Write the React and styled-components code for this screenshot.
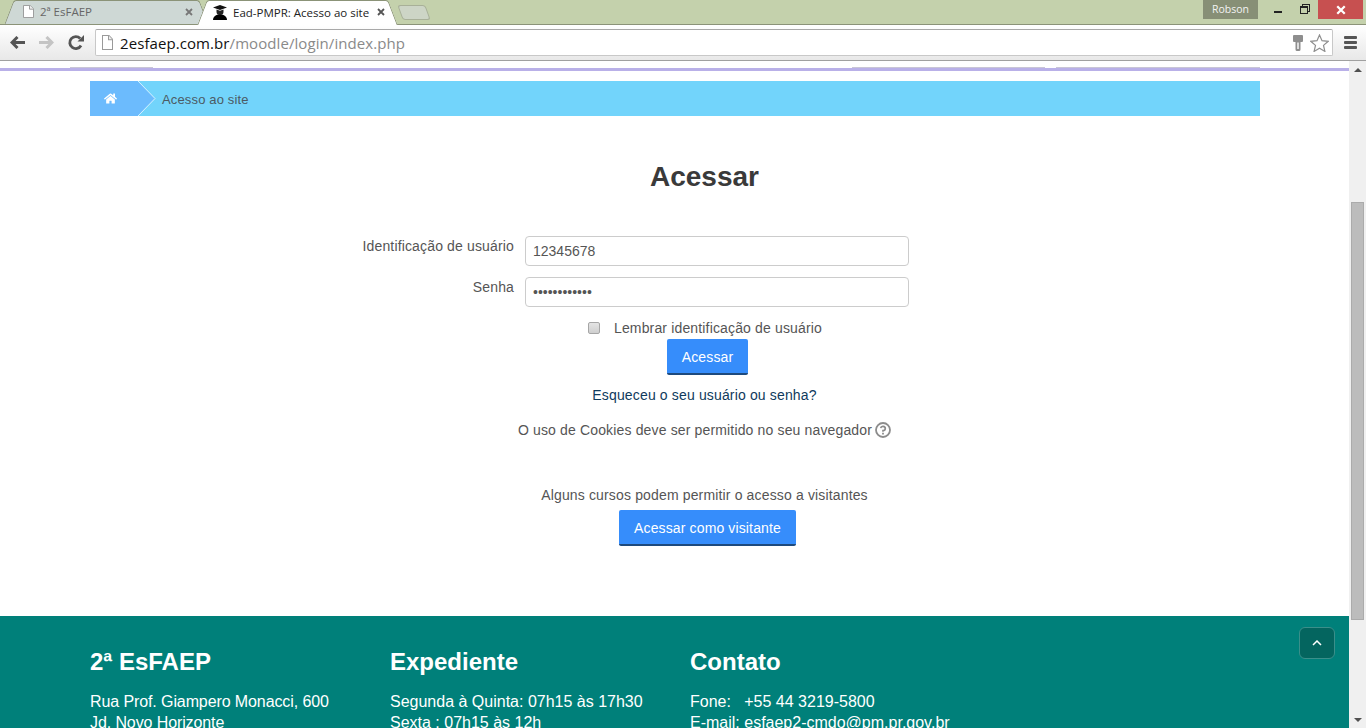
import styled, { createGlobalStyle } from "styled-components";
import { FaHome } from "react-icons/fa";

const GlobalStyle = createGlobalStyle`
  html, body {
    margin: 0;
    height: 100%;
    overflow: hidden;
    background: #ffffff;
  }
  * {
    box-sizing: border-box;
  }
`;

function PageIcon({ height }) {
  return (
    <svg width="11" height={height} viewBox="0 0 11 14" preserveAspectRatio="none">
      <path d="M.5 .5h6.500l3.500 3.500v9.500h-10z" fill="#fff" stroke="#9a9a9a" />
      <path d="M6.500 .5v4h4" fill="#eee" stroke="#9a9a9a" />
    </svg>
  );
}

function CapIcon() {
  return (
    <svg width="14" height="15" viewBox="0 0 14 15">
      <path d="M0 2.500L7 0l7 2.500L7 5z" fill="#111" />
      <path d="M3.500 4.500L7 5.700l3.500-1.200v2.500a3.500 3 0 0 1-7 0z" fill="#222" />
      <path d="M0 15c0-3.500 3-5.500 7-5.500s7 2 7 5.500z" fill="#000" />
    </svg>
  );
}

function ArrowLeft({ color }) {
  return (
    <svg width="15" height="13" viewBox="0 0 15 13">
      <path d="M7.500 1L2 6.500l5.500 5.500M2.500 6.500H15" fill="none" stroke={color} strokeWidth="3" />
    </svg>
  );
}

function ReloadIcon() {
  return (
    <svg width="16" height="16" viewBox="0 0 16 16">
      <path d="M13 10.500A6 6 0 1 1 12.200 3.500" fill="none" stroke="#555" strokeWidth="2.800" />
      <path d="M9.500 6.500H16V0z" fill="#555" />
    </svg>
  );
}

function KeyIcon() {
  return (
    <svg width="10" height="16" viewBox="0 0 10 16">
      <path
        d="M0 1a1 1 0 0 1 1-1h8a1 1 0 0 1 1 1v5a1 1 0 0 1-1 1H7.500v7.500a1.500 1.500 0 0 1-1.500 1.500H4a1.500 1.500 0 0 1-1.500-1.500V7H1a1 1 0 0 1-1-1z"
        fill="#8e8e8e"
      />
      <path d="M4.300 7.500h1.400v6.500H4.300z" fill="#fff" />
    </svg>
  );
}

function StarIcon() {
  return (
    <svg width="19" height="18" viewBox="0 0 19 18">
      <path
        d="M9.500 1l2.500 5.700 6.200.6-4.700 4.100 1.400 6-5.400-3.200-5.400 3.200 1.400-6L.8 7.300 7 6.700z"
        fill="#fff"
        stroke="#8e8e8e"
        strokeWidth="1.200"
      />
    </svg>
  );
}

function CloseGlyph({ color, size }) {
  return (
    <svg width={size} height={size} viewBox="0 0 8 8">
      <path d="M1 1l6 6M7 1L1 7" stroke={color} strokeWidth="1.800" />
    </svg>
  );
}

function HelpIcon() {
  return (
    <svg width="16" height="16" viewBox="0 0 16 16">
      <circle cx="8" cy="8" r="7" fill="none" stroke="#8c8c8c" strokeWidth="1.800" />
      <path d="M5.700 6.200A2.300 2.200 0 1 1 8 8.700v1" fill="none" stroke="#8c8c8c" strokeWidth="1.700" />
      <path d="M7.100 10.800h1.800v1.800H7.100z" fill="#8c8c8c" />
    </svg>
  );
}

export default function App() {
  return (
    <Screen>
      <GlobalStyle />
      <TabStrip>
        <Tab>
          <TabInner>
            <PageIcon height={13} />
            <TabTitle>2ª EsFAEP</TabTitle>
            <CloseGlyph color="#777" size={8} />
          </TabInner>
        </Tab>
        <Tab $active>
          <TabInner $active>
            <CapIcon />
            <TabTitle $active>Ead-PMPR: Acesso ao site</TabTitle>
            <CloseGlyph color="#555" size={8} />
          </TabInner>
        </Tab>
        <NewTab />
        <WindowArea>
          <UserBadge>Robson</UserBadge>
          <WinButton>
            <MinimizeBar />
          </WinButton>
          <WinButton>
            <RestoreBox />
          </WinButton>
          <CloseButton>
            <CloseGlyph color="#fff" size={10} />
          </CloseButton>
        </WindowArea>
      </TabStrip>

      <Toolbar>
        <NavButton>
          <ArrowLeft color="#555" />
        </NavButton>
        <NavButton $flip>
          <ArrowLeft color="#c4c4c4" />
        </NavButton>
        <NavButton>
          <ReloadIcon />
        </NavButton>
        <Omnibox>
          <PageIcon height={15} />
          <Url>
            2esfaep.com.br<UrlPath>/moodle/login/index.php</UrlPath>
          </Url>
          <KeyIcon />
          <StarIcon />
        </Omnibox>
        <MenuBars>
          <i />
          <i />
          <i />
        </MenuBars>
      </Toolbar>

      <Body>
        <Viewport>
          <TopNav>
            <NavLine $width="83px" $left="70px" />
            <NavLine $width="193px" $left="699px" />
            <NavLine $width="204px" $left="11px" />
          </TopNav>
          <Wrapper>
            <Breadcrumb>
              <HomeCrumb>
                <FaHome size={13} color="#ffffff" />
              </HomeCrumb>
              <CrumbArrow width="18" height="35" viewBox="0 0 18 35">
                <path d="M0 0l17 17.500L0 35z" fill="#6cbbfd" />
                <path d="M0 0l17 17.500L0 35" fill="none" stroke="#d8f3ff" />
              </CrumbArrow>
              <CrumbText>Acesso ao site</CrumbText>
            </Breadcrumb>
            <LoginBox>
              <Title>Acessar</Title>
              <FormRow>
                <FieldLabel>Identificação de usuário</FieldLabel>
                <TextInput readOnly value="12345678" />
              </FormRow>
              <FormRow>
                <FieldLabel>Senha</FieldLabel>
                <TextInput readOnly type="password" value="123456789012" />
              </FormRow>
              <RememberRow>
                <Check />
                Lembrar identificação de usuário
              </RememberRow>
              <PrimaryButton $top="1px">Acessar</PrimaryButton>
              <ForgotLink>Esqueceu o seu usuário ou senha?</ForgotLink>
              <Note $top="15px">
                O uso de Cookies deve ser permitido no seu navegador
                <HelpIcon />
              </Note>
              <Note $top="45px">Alguns cursos podem permitir o acesso a visitantes</Note>
              <PrimaryButton $top="5px">Acessar como visitante</PrimaryButton>
            </LoginBox>
          </Wrapper>
          <Footer>
            <FooterColumns>
              <FooterColumn>
                <FooterTitle>2ª EsFAEP</FooterTitle>
                <FooterText $tight>Rua Prof. Giampero Monacci, 600</FooterText>
                <FooterText $tight>Jd. Novo Horizonte</FooterText>
              </FooterColumn>
              <FooterColumn>
                <FooterTitle>Expediente</FooterTitle>
                <FooterText>Segunda à Quinta: 07h15 às 17h30</FooterText>
                <FooterText>Sexta : 07h15 às 12h</FooterText>
              </FooterColumn>
              <FooterColumn>
                <FooterTitle>Contato</FooterTitle>
                <FooterText>Fone:&nbsp;&nbsp; +55 44 3219-5800</FooterText>
                <FooterText>E-mail: esfaep2-cmdo@pm.pr.gov.br</FooterText>
              </FooterColumn>
            </FooterColumns>
            <BackToTop>
              <svg width="10" height="6" viewBox="0 0 10 6">
                <path d="M1 5l4-4 4 4" fill="none" stroke="#fff" strokeWidth="1.500" />
              </svg>
            </BackToTop>
          </Footer>
        </Viewport>
        <Scrollbar>
          <ScrollArrow $up />
          <ScrollTrack>
            <ScrollThumb />
          </ScrollTrack>
          <ScrollArrow />
        </Scrollbar>
      </Body>
    </Screen>
  );
}

const Screen = styled.div`
  width: 1366px;
  height: 728px;
  display: flex;
  flex-direction: column;
  overflow: hidden;
  font-family: "Liberation Sans", Arial, sans-serif;
`;

const TabStrip = styled.div`
  height: 25px;
  flex: none;
  display: flex;
  align-items: flex-end;
  padding-left: 13px;
  background: #c4d1ac;
  border-bottom: 1px solid #8b9378;
`;

const Tab = styled.div`
  position: relative;
  width: ${(p) => (p.$active ? "183px" : "187px")};
  margin-left: ${(p) => (p.$active ? "6px" : "0")};
  height: ${(p) => (p.$active ? "25px" : "24px")};
  margin-bottom: ${(p) => (p.$active ? "-1px" : "0")};
  z-index: ${(p) => (p.$active ? 2 : 1)};

  &::before,
  &::after {
    content: "";
    position: absolute;
    top: 0;
    bottom: 0;
    width: 60%;
    background: ${(p) => (p.$active ? "#ffffff" : "#ced8d5")};
    border-top: 1px solid #8b9378;
  }
  &::before {
    left: -4px;
    transform: skewX(-21deg);
    border-left: 1px solid #8b9378;
    border-radius: 3px 0 0 0;
  }
  &::after {
    right: -4px;
    transform: skewX(21deg);
    border-right: 1px solid #8b9378;
    border-radius: 0 3px 0 0;
  }
`;

const TabInner = styled.div`
  position: relative;
  z-index: 1;
  height: 100%;
  display: flex;
  align-items: center;
  gap: 6px;
  padding: 0 ${(p) => (p.$active ? "4px" : "7px")} 1px ${(p) => (p.$active ? "7px" : "10px")};
`;

const TabTitle = styled.span`
  flex: 1;
  font-family: "Open Sans", "Noto Sans", sans-serif;
  font-size: 11.5px;
  white-space: nowrap;
  color: ${(p) => (p.$active ? "#222222" : "#666666")};
`;

const NewTab = styled.div`
  width: 28px;
  height: 15px;
  margin: 0 0 4px 11px;
  background: #cdd5c6;
  border: 1px solid #a8b098;
  border-radius: 3px;
  transform: skewX(20deg);
`;

const WindowArea = styled.div`
  align-self: flex-start;
  margin-left: auto;
  height: 19px;
  display: flex;
  padding-right: 3px;
`;

const UserBadge = styled.div`
  width: 55px;
  margin-right: 7px;
  background: #878f76;
  color: #f2f2f2;
  font-family: "Open Sans", sans-serif;
  font-size: 10.5px;
  line-height: 18px;
  text-align: center;
`;

const WinButton = styled.div`
  width: 26px;
  display: flex;
  align-items: center;
  justify-content: center;
`;

const MinimizeBar = styled.div`
  width: 8px;
  height: 2px;
  margin-top: 5px;
  background: #222;
`;

const RestoreBox = styled.div`
  width: 8px;
  height: 8px;
  border: 1px solid #222;
  border-top-width: 2px;
  box-shadow: 2px -2px 0 -1px #c4d1ac, 2px -2px 0 0 #222;
`;

const CloseButton = styled.div`
  width: 45px;
  margin-left: 1px;
  background: #c75050;
  display: flex;
  align-items: center;
  justify-content: center;
`;

const Toolbar = styled.div`
  height: 36px;
  flex: none;
  display: flex;
  align-items: center;
  padding: 0 0 0 3px;
  background: linear-gradient(#ffffff, #f1f1f1 60%, #e8e8e8);
  border-bottom: 1px solid #a0a0a0;
`;

const NavButton = styled.div`
  width: 29px;
  height: 26px;
  display: flex;
  align-items: center;
  justify-content: center;
  transform: ${(p) => (p.$flip ? "scaleX(-1)" : "none")};
`;

const Omnibox = styled.div`
  width: 1238px;
  height: 27px;
  margin: 0 11px 0 5px;
  display: flex;
  align-items: center;
  gap: 7px;
  padding: 0 3px 0 6px;
  background: #ffffff;
  border: 1px solid #c8c8c8;
  border-top-color: #a8a8a8;
  border-radius: 2px;
`;

const Url = styled.div`
  flex: 1;
  font-family: "Open Sans", "Noto Sans", sans-serif;
  font-size: 15px;
  letter-spacing: 0.08px;
  color: #111111;
  white-space: nowrap;
`;

const UrlPath = styled.span`
  color: #8a8a8a;
`;

const MenuBars = styled.div`
  width: 13px;
  display: flex;
  flex-direction: column;
  gap: 2px;

  i {
    display: block;
    height: 3px;
    background: #555;
    border-radius: 1px;
  }
`;

const Body = styled.div`
  flex: 1;
  min-height: 0;
  display: flex;
`;

const Viewport = styled.div`
  flex: 1;
  min-width: 0;
  overflow: hidden;
  background: #ffffff;
`;

const TopNav = styled.div`
  height: 10px;
  display: flex;
  align-items: flex-end;
  border-bottom: 3px solid #b9b0e8;
`;

const NavLine = styled.div`
  width: ${(p) => p.$width};
  margin-left: ${(p) => p.$left};
  height: 1px;
  background: #c9c6d6;
`;

const Wrapper = styled.div`
  padding: 10px 89px 70px 90px;
`;

const Breadcrumb = styled.div`
  height: 35px;
  display: flex;
  align-items: center;
  background: #72d4fb;
`;

const HomeCrumb = styled.div`
  width: 48px;
  height: 100%;
  display: flex;
  align-items: center;
  padding-left: 14px;
  background: #6cbbfd;
`;

const CrumbArrow = styled.svg`
  flex: none;
`;

const CrumbText = styled.span`
  margin-left: 6px;
  padding-top: 2px;
  font-size: 13px;
  letter-spacing: 0.15px;
  color: #4c5a63;
`;

const LoginBox = styled.div`
  padding-left: 59px;
  display: flex;
  flex-direction: column;
  align-items: center;
  font-size: 14px;
  line-height: 20px;
  letter-spacing: 0.15px;
  color: #555555;
`;

const Title = styled.h1`
  margin: 41px 0 39px;
  font-size: 28px;
  line-height: 40px;
  font-weight: 700;
  letter-spacing: 0;
  color: #3a3a3a;
`;

const FormRow = styled.div`
  align-self: stretch;
  display: grid;
  grid-template-columns: 365px 384px;
  column-gap: 11px;
  margin-bottom: 11px;
`;

const FieldLabel = styled.label`
  text-align: right;
`;

const TextInput = styled.input`
  height: 30px;
  padding: 0 7px;
  border: 1px solid #cccccc;
  border-radius: 4px;
  outline: none;
  font-family: "Liberation Sans", Arial, sans-serif;
  font-size: 14px;
  color: #555555;
  background: #ffffff;
`;

const RememberRow = styled.div`
  align-self: stretch;
  display: flex;
  align-items: center;
  padding-left: 439px;
  gap: 14px;
`;

const Check = styled.span`
  width: 12px;
  height: 12px;
  background: linear-gradient(#e4e4e4, #cfcfcf);
  border: 1px solid #a6a6a6;
  border-radius: 2px;
`;

const PrimaryButton = styled.button`
  margin: ${(p) => p.$top} 0 0 6px;
  height: 36px;
  padding: 1px 15px 0;
  border: 0;
  border-bottom: 2px solid #1e4a7d;
  border-radius: 2px;
  background: #368dfb;
  color: #ffffff;
  font-family: "Liberation Sans", Arial, sans-serif;
  font-size: 14px;
  letter-spacing: 0.13px;
`;

const ForgotLink = styled.a`
  margin-top: 10px;
  color: #0f3a5c;
`;

const Note = styled.div`
  margin-top: ${(p) => p.$top};
  display: flex;
  align-items: center;
  gap: 3px;
`;

const Footer = styled.div`
  position: relative;
  padding: 32px 0 0 90px;
  height: 200px;
  background: #00807a;
  color: #ffffff;
`;

const FooterColumns = styled.div`
  display: flex;
`;

const FooterColumn = styled.div`
  width: 300px;
`;

const FooterTitle = styled.h3`
  margin: 0 0 15px;
  font-size: 24px;
  line-height: 28px;
  font-weight: 700;
`;

const FooterText = styled.div`
  font-size: 16px;
  line-height: 21px;
  letter-spacing: ${(p) => (p.$tight ? "-0.1px" : "0")};
  white-space: nowrap;
`;

const BackToTop = styled.div`
  position: absolute;
  top: 11px;
  right: 14px;
  width: 36px;
  height: 32px;
  display: flex;
  align-items: center;
  justify-content: center;
  background: #04655f;
  border: 1px solid #3a8f8a;
  border-radius: 6px;
`;

const Scrollbar = styled.div`
  width: 17px;
  flex: none;
  display: flex;
  flex-direction: column;
  background: #f0f0f0;
`;

const ScrollArrow = styled.div`
  height: 17px;
  flex: none;
  display: flex;
  align-items: center;
  justify-content: center;

  &::before {
    content: "";
    border-left: 4px solid transparent;
    border-right: 4px solid transparent;
    ${(p) => (p.$up ? "border-bottom: 4px solid #505050;" : "border-top: 4px solid #505050;")}
  }
`;

const ScrollTrack = styled.div`
  flex: 1;
  padding: 124px 2px 91px;
  display: flex;
`;

const ScrollThumb = styled.div`
  flex: 1;
  background: #bcbcbc;
  border: 1px solid #ababab;
`;
